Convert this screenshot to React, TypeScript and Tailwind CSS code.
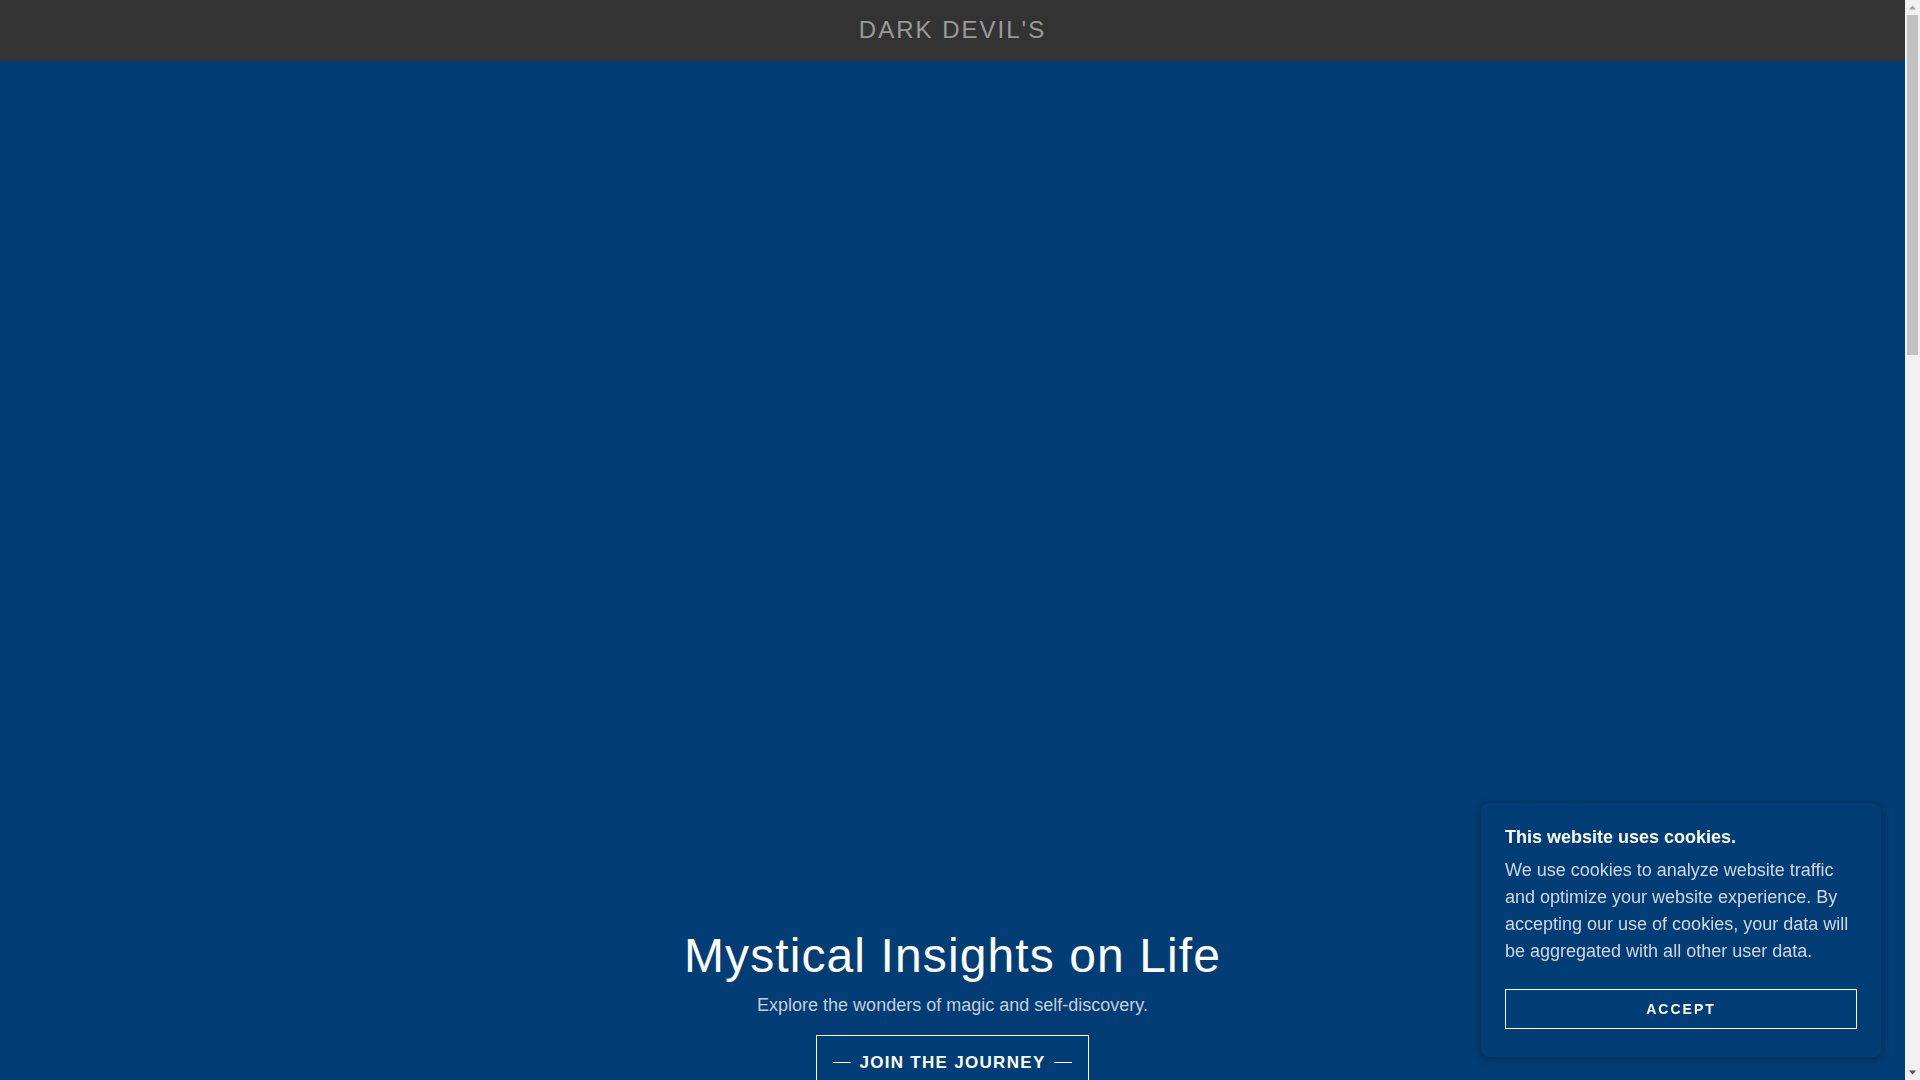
import React from 'react';

const Dash: React.FC = () => <span className="inline-block w-[18px] h-px bg-white" />;

const CookieBanner: React.FC = () => (
  <div className="fixed right-[39px] bottom-[23px] w-[400px] rounded-lg bg-[#023d75] px-6 pt-[23px] pb-7 shadow-[0_2px_8px_rgba(0,0,0,0.3)]">
    <h2 className="text-[18px] leading-[22.5px] font-bold text-white">This website uses cookies.</h2>
    <p className="mt-[9px] text-[18px] leading-[27px] text-[#cfd7e1]">
      We use cookies to analyze website traffic and optimize your website experience. By accepting our use of
      cookies, your data will be aggregated with all other user data.
    </p>
    <button className="mt-6 w-full h-[40px] border border-white text-white text-[14px] font-bold tracking-[2px] uppercase">
      Accept
    </button>
  </div>
);

// classic browser scrollbar, as in the screenshot
const Scrollbar: React.FC = () => (
  <aside className="sticky top-0 h-screen w-[15px] shrink-0 bg-[#f1f1f1] flex flex-col items-center">
    <svg width="15" height="15" viewBox="0 0 15 15" className="shrink-0">
      <path d="M4 9.5 L7.5 5.5 L11 9.5 Z" fill="#a3a3a3" />
    </svg>
    <div className="w-[11px] h-[340px] bg-[#c1c1c1]" />
    <div className="flex-1" />
    <svg width="15" height="15" viewBox="0 0 15 15" className="shrink-0">
      <path d="M4 5.5 L11 5.5 L7.5 9.5 Z" fill="#505050" />
    </svg>
  </aside>
);

export default function App() {
  return (
    <div className="flex bg-[#023d75] font-['Liberation_Sans',Arial,sans-serif]">
      <div className="flex-1 min-w-0 min-h-[3270px]">
        {/* Top bar */}
        <header className="h-[61px] bg-[#333333] flex items-center justify-center pb-[2px]">
          <span className="text-[24px] tracking-[2px] text-[#9a9a9a] uppercase">Dark Devil's</span>
        </header>

        {/* Hero */}
        <section className="flex flex-col items-center pt-[866px] pb-[200px] text-center">
          <h1 className="text-[48px] leading-[57.6px] tracking-[1.1px] text-white">Mystical Insights on Life</h1>
          <p className="mt-[7px] text-[18px] leading-[27px] text-[#c4cfdb]">Explore the wonders of magic and self-discovery.</p>
          <a
            href="#"
            className="mt-4 flex items-center gap-2 border border-white px-4 py-[15px] text-white text-[17px] leading-[24px] font-bold tracking-[1.3px] uppercase"
          >
            <Dash />
            <span>Join the Journey</span>
            <Dash />
          </a>
        </section>
      </div>

      <Scrollbar />
      <CookieBanner />
    </div>
  );
}
